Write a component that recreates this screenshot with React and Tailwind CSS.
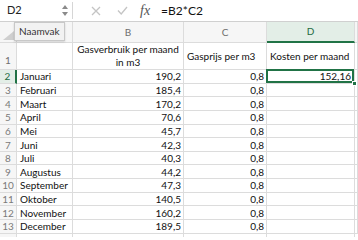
import React from "react";

const rows = [
  ["Januari", "190,2", "0,8", "152,16"],
  ["Februari", "185,4", "0,8", ""],
  ["Maart", "170,2", "0,8", ""],
  ["April", "70,6", "0,8", ""],
  ["Mei", "45,7", "0,8", ""],
  ["Juni", "42,3", "0,8", ""],
  ["Juli", "40,3", "0,8", ""],
  ["Augustus", "44,2", "0,8", ""],
  ["September", "47,3", "0,8", ""],
  ["Oktober", "140,5", "0,8", ""],
  ["November", "160,2", "0,8", ""],
  ["December", "189,5", "0,8", ""],
];

const cols = "grid grid-cols-[17px_56px_111px_83px_88px_1fr]";
const cell = "border-r border-b border-[#dcdcdc] overflow-hidden whitespace-nowrap";

function FormulaBar() {
  return (
    <div className="flex h-[22px] items-center border-b border-[#d0d0d0] bg-white text-[11px] text-[#222]">
      <div className="w-[58px] pl-[7px]">D2</div>
      <div className="flex w-[14px] flex-col items-center gap-[3px]">
        <svg width="6" height="4" viewBox="0 0 6 4">
          <path d="M3 0L6 4H0z" fill="#8a8a8a" />
        </svg>
        <svg width="6" height="4" viewBox="0 0 6 4">
          <path d="M0 0h6L3 4z" fill="#8a8a8a" />
        </svg>
      </div>
      <div className="h-[17px] w-px bg-[#d6d6d6]" />
      <div className="ml-[13px] flex w-[20px] justify-center">
        <svg width="10" height="10" viewBox="0 0 10 10">
          <path d="M1 1l8 8M9 1l-8 8" stroke="#c4c4c4" strokeWidth="1.3" />
        </svg>
      </div>
      <div className="ml-[6px] flex w-[20px] justify-center">
        <svg width="11" height="9" viewBox="0 0 11 9">
          <path d="M1 4.5l3.2 3.5L10 1" stroke="#c4c4c4" strokeWidth="1.3" fill="none" />
        </svg>
      </div>
      <div className="ml-[8px] font-['Liberation_Serif',serif] text-[14px] italic text-[#555]">
        fx
      </div>
      <div className="ml-[11px] font-['Lato',sans-serif] text-[12px] text-[#111]">=B2*C2</div>
    </div>
  );
}

export default function App() {
  return (
    <div className="relative h-[237px] w-[358px] overflow-hidden bg-white font-['Lato',sans-serif]">
      <FormulaBar />
      {/* column headers */}
      <div className={`${cols} h-[21px] text-[10px] text-[#6e6e6e]`}>
        <div className={`${cell} relative bg-[#f6f6f6]`}>
          <svg className="absolute right-[2px] bottom-[2px]" width="11" height="9" viewBox="0 0 11 9">
            <path d="M11 0V9H0z" fill="#cfcfcf" />
          </svg>
        </div>
        <div className={`${cell} bg-[#f6f6f6]`} />
        <div className={`${cell} flex items-center justify-center bg-[#f6f6f6]`}>B</div>
        <div className={`${cell} flex items-center justify-center bg-[#f6f6f6]`}>C</div>
        <div className="flex items-center justify-center border-r border-b-2 border-r-[#dcdcdc] border-b-[#217346] bg-[#e3eee7] text-[#1d6b3f]">
          D
        </div>
        <div className={`${cell} bg-[#f6f6f6]`} />
      </div>
      {/* row 1 */}
      <div className={`${cols} h-[27px] text-[10px] text-[#111]`}>
        <div className={`${cell} flex items-end justify-center bg-[#f6f6f6] pb-[1px] text-[10px] text-[#6e6e6e]`}>
          1
        </div>
        <div className={cell} />
        <div className={`${cell} flex flex-col items-center justify-center leading-[13px]`}>
          <span>Gasverbruik per maand</span>
          <span>in m3</span>
        </div>
        <div className={`${cell} flex items-center pl-[3px]`}>Gasprijs per m3</div>
        <div className={`${cell} flex items-center pl-[3px]`}>Kosten per maand</div>
        <div className={cell} />
      </div>
      {rows.map((r, i) => (
        <div key={r[0]} className={`${cols} h-[13.65px] text-[10px] leading-[12px] text-[#111]`}>
          <div
            className={`flex items-center justify-center border-b border-[#dcdcdc] text-[10px] ${
              i === 0
                ? "border-r-2 border-r-[#217346] bg-[#e3eee7] text-[#1d6b3f]"
                : "border-r border-r-[#dcdcdc] bg-[#f6f6f6] text-[#7a7a7a]"
            }`}
          >
            {i + 2}
          </div>
          <div className={`${cell} flex items-center pl-[3px]`}>{r[0]}</div>
          <div className={`${cell} flex items-center justify-end pr-[2px]`}>{r[1]}</div>
          <div className={`${cell} flex items-center justify-end pr-[2px]`}>{r[2]}</div>
          {i === 0 ? (
            <div className="relative flex items-center justify-end border-r border-b border-[#dcdcdc] pr-[3px]">
              {r[3]}
              <div className="absolute -top-px -left-px right-0 bottom-0 border-2 border-[#217346]" />
              <div className="absolute -right-[3px] -bottom-[3px] h-[5px] w-[5px] border border-white bg-[#217346]" />
            </div>
          ) : (
            <div className={cell} />
          )}
          <div className={cell} />
        </div>
      ))}
      <div className={`${cols} h-[10px]`}>
        <div className="border-r border-[#dcdcdc] bg-[#f6f6f6]" />
        <div className="border-r border-[#dcdcdc]" />
        <div className="border-r border-[#dcdcdc]" />
        <div className="border-r border-[#dcdcdc]" />
        <div className="border-r border-[#dcdcdc]" />
        <div />
      </div>
      {/* name box tooltip */}
      <div className="absolute top-[22px] left-[14px] border border-[#c8c8c8] bg-[#f2f2f2] px-[4px] py-[1px] text-[10px] text-[#333] shadow-[0_1px_2px_rgba(0,0,0,0.15)]">
        Naamvak
      </div>
    </div>
  );
}
